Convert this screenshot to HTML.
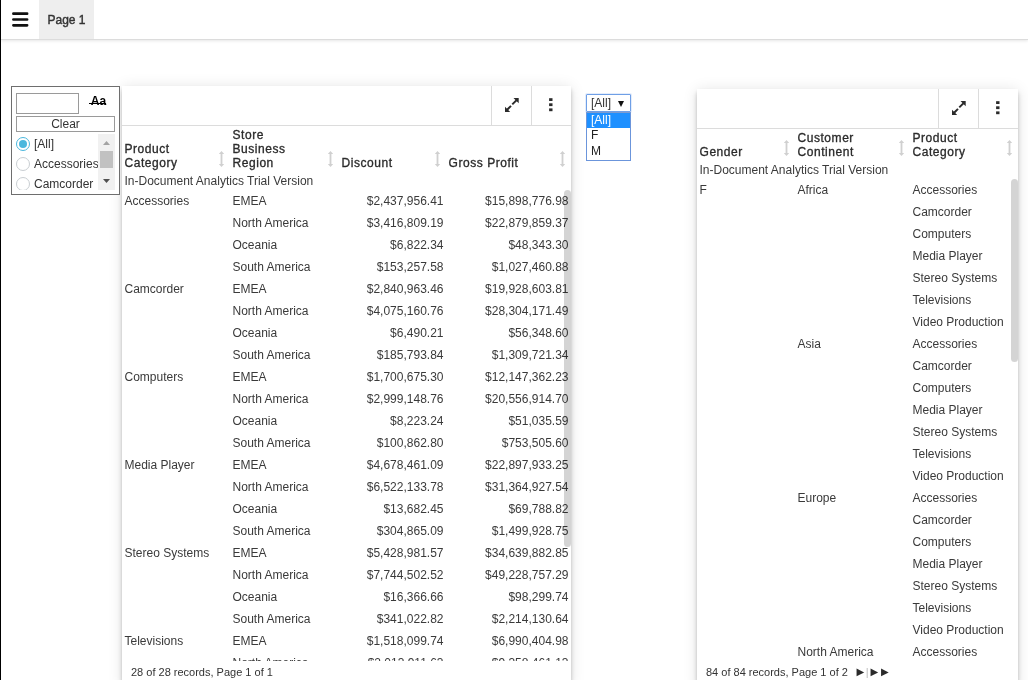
<!DOCTYPE html>
<html><head><meta charset="utf-8"><title>Page 1</title>
<style>
html,body{margin:0;padding:0;}
body{width:1028px;height:680px;overflow:hidden;background:#fff;position:relative;font-family:"Liberation Sans",Arial,sans-serif;font-size:12px;color:#333;}
body>*{will-change:transform;}
.edge{position:absolute;left:0;top:0;width:1px;height:680px;background:#000;}
.top{position:absolute;left:1px;top:0;width:1027px;height:39px;border-bottom:1px solid #dcdcdc;box-shadow:0 1px 3px rgba(0,0,0,.10);background:#fff;}
.ham{position:absolute;left:10px;top:12px;}
.tab{position:absolute;left:38px;top:0;width:55px;height:39px;background:#eee;line-height:41px;text-align:center;color:#333;font-size:12px;-webkit-text-stroke:.4px #333;}
.filter{z-index:2;position:absolute;left:11px;top:86px;width:107px;height:107px;border:1px solid #6e6e6e;background:#fff;}
.filter .inp{position:absolute;left:4px;top:6px;width:61px;height:19px;border:1px solid #9a9a9a;}
.filter .aa{position:absolute;left:78.8px;top:7px;font-weight:bold;font-size:12px;color:#000;line-height:14px;}
.filter .aa:after{content:"";position:absolute;left:-2px;right:0.3px;top:9.4px;height:1px;background:#000;}
.filter .clr{position:absolute;left:4px;top:29px;width:97px;height:14px;border:1px solid #9a9a9a;text-align:center;line-height:15px;font-size:12px;color:#333;}
.filter .list{position:absolute;left:4px;top:47px;width:99px;height:56px;overflow:hidden;}
.opt{position:absolute;left:0;height:20px;line-height:20px;white-space:nowrap;}
.opt i{position:absolute;left:0;top:3px;width:12px;height:12px;border:1px solid #c9ced2;border-radius:50%;box-sizing:content-box;background:#fff;}
.opt i.on{border-color:#4ab7dd;}
.opt i.on:after{content:"";position:absolute;left:2px;top:2px;width:8px;height:8px;border-radius:50%;background:#4ab7dd;}
.opt span{position:absolute;left:18px;top:0;}
.sb{position:absolute;left:82px;top:0;width:17px;height:56px;background:#f1f1f1;}
.sb .th{position:absolute;left:2px;top:17px;width:13px;height:17px;background:#c1c1c1;}
.panel{position:absolute;background:#fff;box-shadow:0 2px 4px -1px rgba(0,0,0,.2),0 4px 6px 0 rgba(0,0,0,.14),0 1px 14px 0 rgba(0,0,0,.11);overflow:hidden;}
.tb{position:absolute;left:0;top:0;right:0;height:39px;border-bottom:1px solid #dcdcdc;}
.tb .b{position:absolute;top:0;width:39px;height:39px;border-left:1px solid #dcdcdc;}
.tb .b svg{position:absolute;}
table{border-collapse:collapse;table-layout:fixed;position:absolute;left:0;}
td,th{padding:0 0 0 2.5px;text-align:left;font-size:12px;white-space:nowrap;overflow:visible;}
th{font-weight:normal;-webkit-text-stroke:0.32px #2b2b2b;letter-spacing:0.55px;vertical-align:bottom;line-height:14px;position:relative;color:#2b2b2b;padding-bottom:1px;}
td{height:22px;line-height:22px;font-weight:normal;color:#3a3a3a;}
td.n{text-align:right;padding:0 2.5px 0 0;}
.srt{position:absolute;right:5px;bottom:4px;}
.trial{position:absolute;left:2.5px;white-space:nowrap;color:#3a3a3a;}
.body{position:absolute;left:0;right:0;overflow:hidden;}
.foot{position:absolute;font-size:11px;color:#333;white-space:nowrap;}
.nav{position:absolute;font-family:"DejaVu Sans",sans-serif;font-size:10px;line-height:14px;white-space:nowrap;color:#2b2b2b;}
.nav span{display:inline-block;width:7.7px;margin-right:2.8px;}
.nav span:first-child{margin-right:1.6px;}
.nav span.bar{position:relative;top:1px;width:3px;margin-right:1.8px;color:#bbb;font-family:"Liberation Sans",sans-serif;font-size:11px;}
.vsb{position:absolute;width:7px;border-radius:4px;background:rgba(0,0,0,.17);}
.sel{position:absolute;left:586px;top:94px;width:43px;height:16px;border:1px solid #6f9fe6;border-radius:1px;background:#fff;box-shadow:0 0 0 1px rgba(120,165,235,.2);}
.sel span{position:absolute;left:4px;top:1px;line-height:14px;}
.sel b{position:absolute;left:31px;top:6px;width:0;height:0;border-left:3.5px solid transparent;border-right:3.5px solid transparent;border-top:6px solid #111;}
.dd{position:absolute;left:586px;top:112px;width:43px;height:47px;border:1px solid #6b95db;border-top-color:#7d9bd0;background:#fff;}
.dd div{height:15px;line-height:15px;padding-left:4px;color:#222;}
.dd div:last-child{height:17px;line-height:17.5px;}
.dd div.s{background:#1e90ff;color:#fff;}
</style></head><body>
<div class="top">
<svg class="ham" width="18" height="16" viewBox="0 0 18 16"><path d="M2.4 1.7H16.1M2.4 7.5H16.1M2.4 13.3H16.1" stroke="#111" stroke-width="2.7" stroke-linecap="round"/></svg>
<div class="tab">Page 1</div>
</div>
<div class="edge"></div>

<div class="filter">
<div class="inp"></div><div class="aa">Aa</div><div class="clr">Clear</div>
<div class="list">
<div class="opt" style="top:0"><i class="on"></i><span>[All]</span></div>
<div class="opt" style="top:20px"><i></i><span>Accessories</span></div>
<div class="opt" style="top:40px"><i></i><span>Camcorder</span></div>
<div class="sb"><div class="th"></div>
<svg style="position:absolute;left:0;top:0" width="17" height="56"><path d="M5 11L8.5 7L12 11Z" fill="#a3a3a3"/><path d="M5 45L8.5 49L12 45Z" fill="#505050"/></svg>
</div>
</div>
</div>

<div class="panel" style="left:122px;top:86px;width:449px;height:600px;">
<div class="tb"><div class="b" style="left:369px"><span style="position:absolute;left:12.6px;top:12px"><svg width="14" height="14" viewBox="0 0 14 14"><path d="M8.5 0H13.7V5.2ZM0 8.7V13.9H5.2Z" fill="#2b2b2b"/><path d="M11.6 2.1L7.3 6.4M2.1 11.8L6.0 7.9" stroke="#2b2b2b" stroke-width="2" fill="none"/></svg></span></div><div class="b" style="left:409px"><span style="position:absolute;left:17px;top:12px"><svg width="4" height="14" viewBox="0 0 4 14"><rect x="0.1" y="0.2" width="3.4" height="2.8" fill="#2b2b2b"/><rect x="0.1" y="5.3" width="3.4" height="2.8" fill="#2b2b2b"/><rect x="0.1" y="10.4" width="3.4" height="2.8" fill="#2b2b2b"/></svg></span></div></div>
<table style="top:41px;width:449px"><colgroup><col style="width:108px"><col style="width:109px"><col style="width:107px"><col style="width:125px"></colgroup>
<tr style="height:44px"><th>Product<br>Category<svg class="srt" width="7" height="16" viewBox="0 0 7 16"><path d="M3.5 0L6.2 3H4.4V13H6.2L3.5 16L0.8 13H2.6V3H0.8Z" fill="#d0d0d0"/></svg></th><th>Store<br>Business<br>Region<svg class="srt" width="7" height="16" viewBox="0 0 7 16"><path d="M3.5 0L6.2 3H4.4V13H6.2L3.5 16L0.8 13H2.6V3H0.8Z" fill="#d0d0d0"/></svg></th><th>Discount<svg class="srt" width="7" height="16" viewBox="0 0 7 16"><path d="M3.5 0L6.2 3H4.4V13H6.2L3.5 16L0.8 13H2.6V3H0.8Z" fill="#d0d0d0"/></svg></th><th>Gross Profit<svg class="srt" width="7" height="16" viewBox="0 0 7 16"><path d="M3.5 0L6.2 3H4.4V13H6.2L3.5 16L0.8 13H2.6V3H0.8Z" fill="#d0d0d0"/></svg></th></tr></table>
<div class="trial" style="top:88px;line-height:14px">In-Document Analytics Trial Version</div>
<div class="body" style="top:104px;height:471px">
<table style="top:0;width:449px"><colgroup><col style="width:108px"><col style="width:109px"><col style="width:107px"><col style="width:125px"></colgroup>
<tr><td>Accessories</td><td>EMEA</td><td class="n">$2,437,956.41</td><td class="n">$15,898,776.98</td></tr>
<tr><td></td><td>North America</td><td class="n">$3,416,809.19</td><td class="n">$22,879,859.37</td></tr>
<tr><td></td><td>Oceania</td><td class="n">$6,822.34</td><td class="n">$48,343.30</td></tr>
<tr><td></td><td>South America</td><td class="n">$153,257.58</td><td class="n">$1,027,460.88</td></tr>
<tr><td>Camcorder</td><td>EMEA</td><td class="n">$2,840,963.46</td><td class="n">$19,928,603.81</td></tr>
<tr><td></td><td>North America</td><td class="n">$4,075,160.76</td><td class="n">$28,304,171.49</td></tr>
<tr><td></td><td>Oceania</td><td class="n">$6,490.21</td><td class="n">$56,348.60</td></tr>
<tr><td></td><td>South America</td><td class="n">$185,793.84</td><td class="n">$1,309,721.34</td></tr>
<tr><td>Computers</td><td>EMEA</td><td class="n">$1,700,675.30</td><td class="n">$12,147,362.23</td></tr>
<tr><td></td><td>North America</td><td class="n">$2,999,148.76</td><td class="n">$20,556,914.70</td></tr>
<tr><td></td><td>Oceania</td><td class="n">$8,223.24</td><td class="n">$51,035.59</td></tr>
<tr><td></td><td>South America</td><td class="n">$100,862.80</td><td class="n">$753,505.60</td></tr>
<tr><td>Media Player</td><td>EMEA</td><td class="n">$4,678,461.09</td><td class="n">$22,897,933.25</td></tr>
<tr><td></td><td>North America</td><td class="n">$6,522,133.78</td><td class="n">$31,364,927.54</td></tr>
<tr><td></td><td>Oceania</td><td class="n">$13,682.45</td><td class="n">$69,788.82</td></tr>
<tr><td></td><td>South America</td><td class="n">$304,865.09</td><td class="n">$1,499,928.75</td></tr>
<tr><td>Stereo Systems</td><td>EMEA</td><td class="n">$5,428,981.57</td><td class="n">$34,639,882.85</td></tr>
<tr><td></td><td>North America</td><td class="n">$7,744,502.52</td><td class="n">$49,228,757.29</td></tr>
<tr><td></td><td>Oceania</td><td class="n">$16,366.66</td><td class="n">$98,299.74</td></tr>
<tr><td></td><td>South America</td><td class="n">$341,022.82</td><td class="n">$2,214,130.64</td></tr>
<tr><td>Televisions</td><td>EMEA</td><td class="n">$1,518,099.74</td><td class="n">$6,990,404.98</td></tr>
<tr><td></td><td>North America</td><td class="n">$2,013,911.63</td><td class="n">$9,358,461.13</td></tr>
</table></div>
<div class="vsb" style="left:442px;top:104px;height:357px"></div>
<div class="foot" style="left:9px;top:580px">28 of 28 records, Page 1 of 1</div>
</div>

<div class="sel"><span>[All]</span><b></b></div>
<div class="dd"><div class="s">[All]</div><div>F</div><div>M</div></div>

<div class="panel" style="left:697px;top:89px;width:321px;height:600px;">
<div class="tb"><div class="b" style="left:241px"><span style="position:absolute;left:12.6px;top:12px"><svg width="14" height="14" viewBox="0 0 14 14"><path d="M8.5 0H13.7V5.2ZM0 8.7V13.9H5.2Z" fill="#2b2b2b"/><path d="M11.6 2.1L7.3 6.4M2.1 11.8L6.0 7.9" stroke="#2b2b2b" stroke-width="2" fill="none"/></svg></span></div><div class="b" style="left:281px"><span style="position:absolute;left:17px;top:12px"><svg width="4" height="14" viewBox="0 0 4 14"><rect x="0.1" y="0.2" width="3.4" height="2.8" fill="#2b2b2b"/><rect x="0.1" y="5.3" width="3.4" height="2.8" fill="#2b2b2b"/><rect x="0.1" y="10.4" width="3.4" height="2.8" fill="#2b2b2b"/></svg></span></div></div>
<table style="top:41px;width:321px"><colgroup><col style="width:98px"><col style="width:115px"><col style="width:108px"></colgroup>
<tr style="height:30px"><th>Gender<svg class="srt" width="7" height="16" viewBox="0 0 7 16"><path d="M3.5 0L6.2 3H4.4V13H6.2L3.5 16L0.8 13H2.6V3H0.8Z" fill="#d0d0d0"/></svg></th><th>Customer<br>Continent<svg class="srt" width="7" height="16" viewBox="0 0 7 16"><path d="M3.5 0L6.2 3H4.4V13H6.2L3.5 16L0.8 13H2.6V3H0.8Z" fill="#d0d0d0"/></svg></th><th>Product<br>Category<svg class="srt" width="7" height="16" viewBox="0 0 7 16"><path d="M3.5 0L6.2 3H4.4V13H6.2L3.5 16L0.8 13H2.6V3H0.8Z" fill="#d0d0d0"/></svg></th></tr></table>
<div class="trial" style="top:74px;line-height:14px">In-Document Analytics Trial Version</div>
<div class="body" style="top:90px;height:484px">
<table style="top:0;width:321px"><colgroup><col style="width:98px"><col style="width:115px"><col style="width:108px"></colgroup>
<tr><td>F</td><td>Africa</td><td>Accessories</td></tr>
<tr><td></td><td></td><td>Camcorder</td></tr>
<tr><td></td><td></td><td>Computers</td></tr>
<tr><td></td><td></td><td>Media Player</td></tr>
<tr><td></td><td></td><td>Stereo Systems</td></tr>
<tr><td></td><td></td><td>Televisions</td></tr>
<tr><td></td><td></td><td>Video Production</td></tr>
<tr><td></td><td>Asia</td><td>Accessories</td></tr>
<tr><td></td><td></td><td>Camcorder</td></tr>
<tr><td></td><td></td><td>Computers</td></tr>
<tr><td></td><td></td><td>Media Player</td></tr>
<tr><td></td><td></td><td>Stereo Systems</td></tr>
<tr><td></td><td></td><td>Televisions</td></tr>
<tr><td></td><td></td><td>Video Production</td></tr>
<tr><td></td><td>Europe</td><td>Accessories</td></tr>
<tr><td></td><td></td><td>Camcorder</td></tr>
<tr><td></td><td></td><td>Computers</td></tr>
<tr><td></td><td></td><td>Media Player</td></tr>
<tr><td></td><td></td><td>Stereo Systems</td></tr>
<tr><td></td><td></td><td>Televisions</td></tr>
<tr><td></td><td></td><td>Video Production</td></tr>
<tr><td></td><td>North America</td><td>Accessories</td></tr>
<tr><td></td><td></td><td>Camcorder</td></tr>
</table></div>
<div class="vsb" style="left:314px;top:90px;height:183px"></div>
<div class="foot" style="left:9px;top:577px">84 of 84 records, Page 1 of 2</div>
<div class="nav" style="left:159.4px;top:575px"><span>&#9654;</span><span class="bar">|</span><span>&#9654;</span><span>&#9654;</span></div>
</div>
</body></html>
